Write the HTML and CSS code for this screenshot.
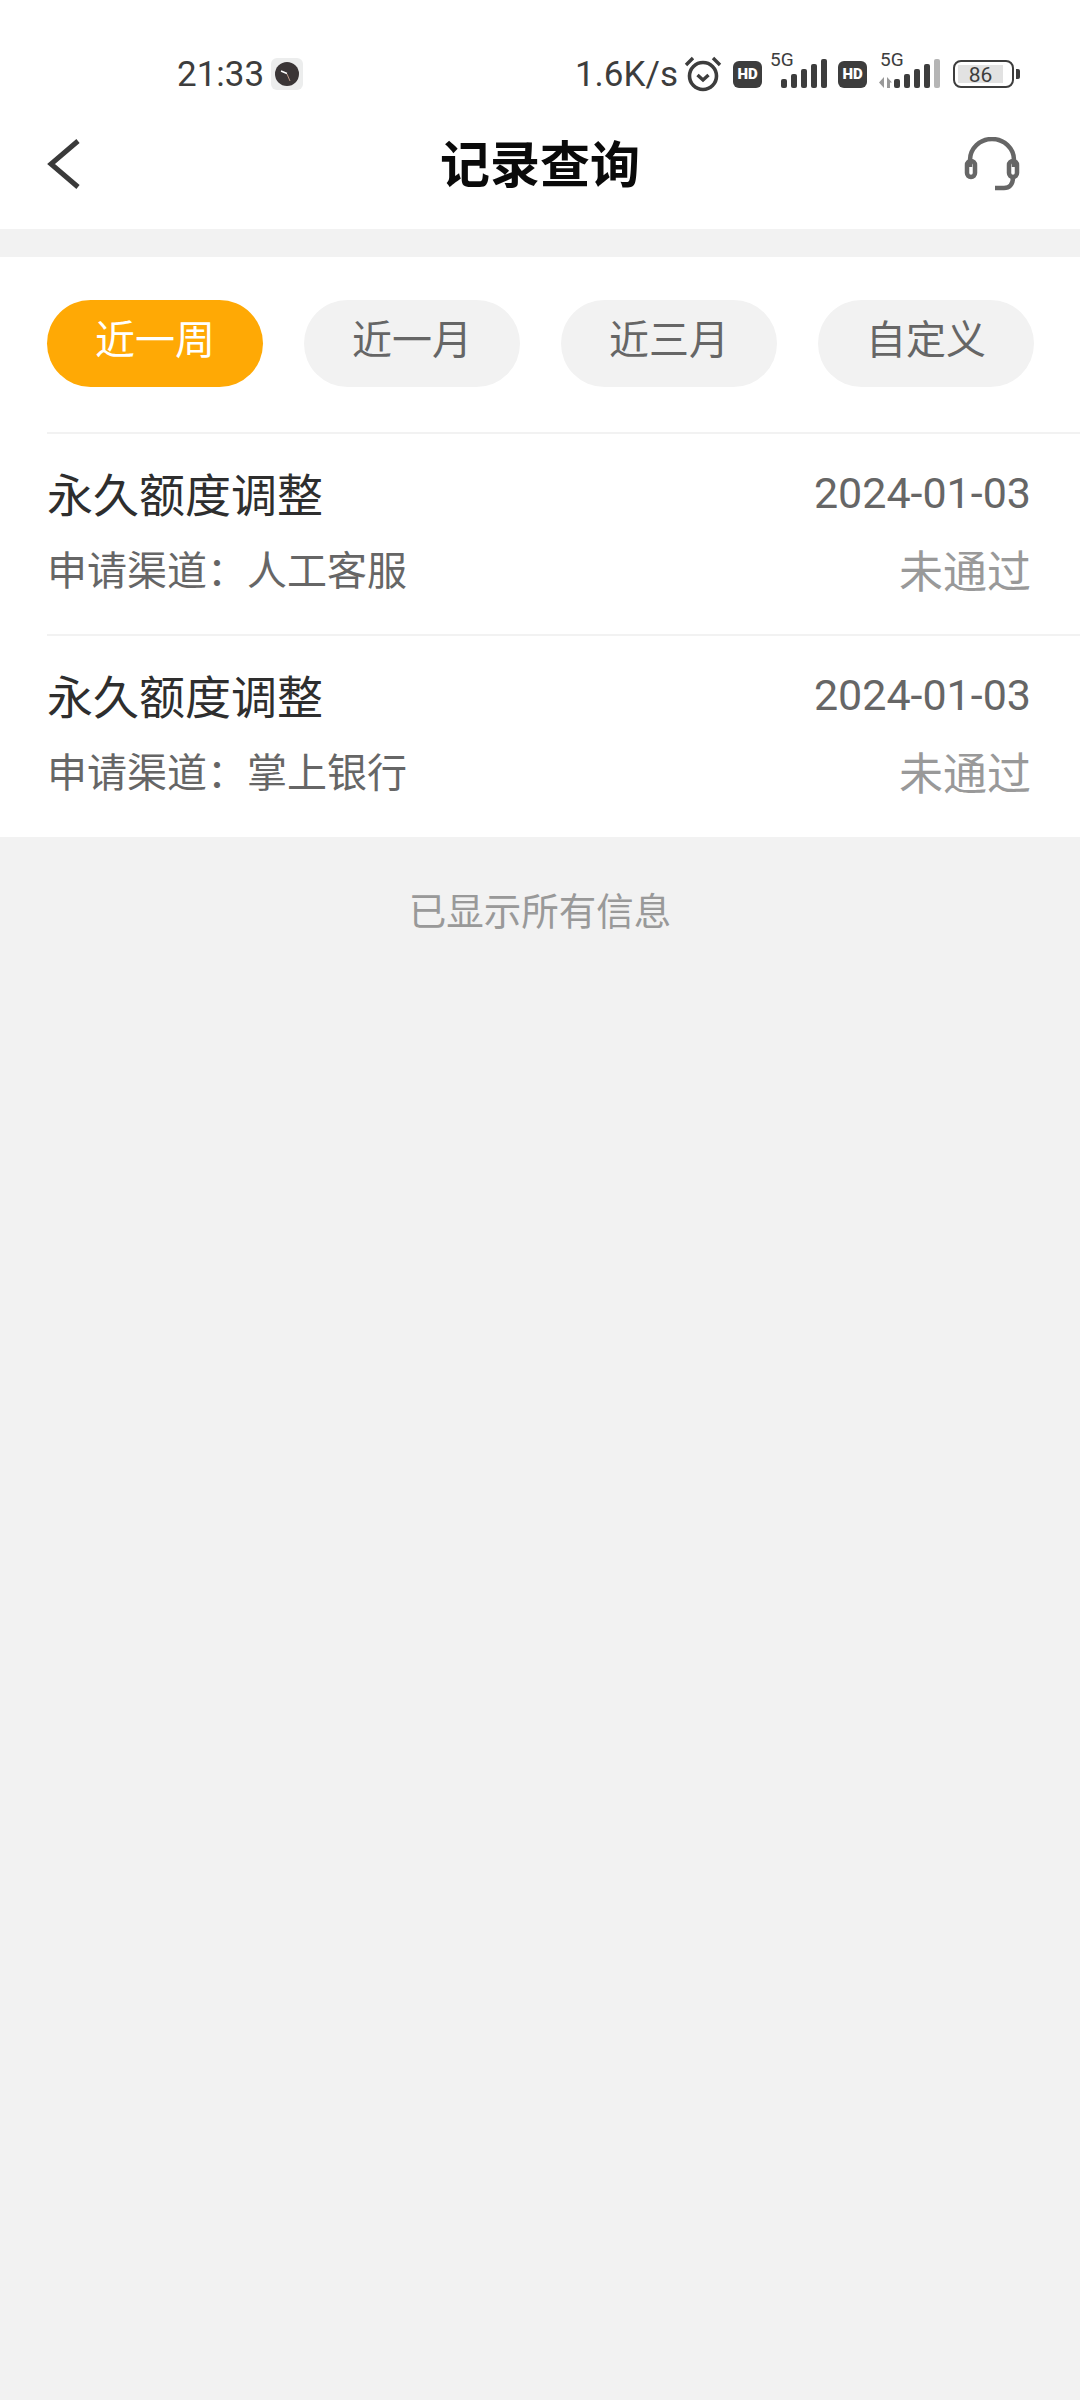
FILE: index.html
```html
<!DOCTYPE html>
<html lang="zh-CN">
<head>
    <meta charset="UTF-8">
    <meta name="viewport" content="width=device-width, initial-scale=1.0">
    <title>记录查询</title>
    <link rel="stylesheet" href="styles.css">
</head>
<body>
    <div class="top">
        <div class="statusbar">
            <div class="status-left">
                <span class="time">21:33</span>
                <span class="app-icon">
                    <svg width="24" height="24" viewBox="0 0 24 24">
                        <circle cx="12" cy="12" r="12" fill="#3a3536"/>
                        <path d="M6 9l6 2.5" stroke="#fff" stroke-width="1.4"/>
                        <path d="M12 12l3 7" stroke="#b98" stroke-width="1"/>
                    </svg>
                </span>
            </div>
            <div class="status-right">
                <span class="speed">1.6K/s</span>
                <svg class="alarm" width="38" height="38" viewBox="0 0 38 38" fill="none" stroke="#3d3d3d">
                    <circle cx="19" cy="21" r="13.5" stroke-width="3.6"/>
                    <path d="M13.5 20l5.5 5 5.5-5" stroke-width="3.4"/>
                    <path d="M2 10l7-7M36 10l-7-7" stroke-width="3.4"/>
                </svg>
                <span class="hd">HD</span>
                <span class="signal">
                    <span class="net">5G</span>
                    <svg width="46" height="30" viewBox="0 0 46 30" fill="#3d3d3d">
                        <rect x="0" y="20" width="6" height="9" rx="2"/>
                        <rect x="10" y="15" width="6" height="14" rx="2"/>
                        <rect x="20" y="10" width="6" height="19" rx="2"/>
                        <rect x="30" y="5" width="6" height="24" rx="2"/>
                        <rect x="40" y="0" width="6" height="29" rx="2"/>
                    </svg>
                </span>
                <span class="hd">HD</span>
                <span class="signal signal-two">
                    <span class="net">5G</span>
                    <svg width="61" height="30" viewBox="0 0 61 30" fill="#3d3d3d">
                        <path d="M5 18v11l-5-5.500zM8 18l5 5.500h-2v5.500h-3z" fill="#999"/>
                        <rect x="15" y="20" width="6" height="9" rx="2"/>
                        <rect x="25" y="15" width="6" height="14" rx="2"/>
                        <rect x="35" y="10" width="6" height="19" rx="2"/>
                        <rect x="45" y="5" width="6" height="24" rx="2"/>
                        <rect x="55" y="0" width="6" height="29" rx="2" fill="#b5b5b5"/>
                    </svg>
                </span>
                <span class="battery">
                    <span class="battery-body"><span class="battery-level">86</span></span>
                    <span class="battery-tip"></span>
                </span>
            </div>
        </div>
        <div class="header">
            <svg class="back" width="34" height="50" viewBox="0 0 34 50" fill="none">
                <path d="M31 2L4 25l27 23" stroke="#3a3a3a" stroke-width="5"/>
            </svg>
            <h1>记录查询</h1>
            <svg class="service" width="56" height="54" viewBox="0 0 56 54" fill="none" stroke="#666" stroke-width="4.500">
                <path d="M6 30v-7a22 21 0 0 1 44 0v7"/>
                <rect x="3" y="24" width="8" height="16" rx="4"/>
                <rect x="45" y="24" width="8" height="16" rx="4"/>
                <path d="M49 40c0 8-4 11-9 11h-9"/>
            </svg>
        </div>
    </div>

    <div class="panel">
        <div class="filters">
            <span class="pill active">近一周</span>
            <span class="pill">近一月</span>
            <span class="pill">近三月</span>
            <span class="pill">自定义</span>
        </div>
        <div class="record">
            <div class="record-row">
                <span class="record-name">永久额度调整</span>
                <span class="record-date">2024-01-03</span>
            </div>
            <div class="record-row">
                <span class="record-channel">申请渠道：人工客服</span>
                <span class="record-status">未通过</span>
            </div>
        </div>
        <div class="record">
            <div class="record-row">
                <span class="record-name">永久额度调整</span>
                <span class="record-date">2024-01-03</span>
            </div>
            <div class="record-row">
                <span class="record-channel">申请渠道：掌上银行</span>
                <span class="record-status">未通过</span>
            </div>
        </div>
    </div>

    <p class="end-note">已显示所有信息</p>
</body>
</html>
```

FILE: styles.css
```css
* {
    box-sizing: border-box;
}
body {
    margin: 0;
    min-height: 2400px;
    background: #f2f2f2;
    font-family: Roboto, "Noto Sans CJK SC", sans-serif;
}
.top {
    height: 229px;
    background: white;
}
.statusbar {
    display: flex;
    justify-content: space-between;
    align-items: center;
    height: 102px;
    padding: 46px 60px 0 177px;
    color: #3d3d3d;
}
.status-left, .status-right {
    display: flex;
    align-items: center;
}
.time {
    font-size: 35px;
}
.app-icon {
    display: flex;
    align-items: center;
    justify-content: center;
    width: 32px;
    height: 32px;
    margin-left: 7px;
    background: #eceded;
    border-radius: 6px;
}
.speed {
    font-size: 35px;
    margin-right: 6px;
}
.hd {
    width: 29px;
    height: 27px;
    margin: 0 8px 0 11px;
    background: #3d3d3d;
    border-radius: 6px;
    color: white;
    font-size: 15px;
    font-weight: 900;
    line-height: 27px;
    text-align: center;
}
.signal {
    position: relative;
    display: flex;
    align-items: flex-end;
    justify-content: flex-end;
    width: 57px;
    height: 30px;
}
.signal-two {
    width: 61px;
    margin-left: 4px;
}
.net {
    position: absolute;
    left: 0;
    top: -9px;
    font-size: 19px;
    line-height: 20px;
}
.signal-two .net {
    left: 1px;
}
.battery {
    display: flex;
    align-items: center;
    margin-left: 13px;
}
.battery-body {
    display: flex;
    align-items: center;
    width: 61px;
    height: 28px;
    padding: 3px;
    border: 2.500px solid #3d3d3d;
    border-radius: 8px;
}
.battery-level {
    width: 45px;
    height: 100%;
    background: #e2e2e2;
    font-size: 21px;
    line-height: 20px;
    text-align: center;
}
.battery-tip {
    width: 4px;
    height: 10px;
    margin-left: 2px;
    background: #3d3d3d;
    border-radius: 0 2px 2px 0;
}
.header {
    position: relative;
    display: flex;
    justify-content: space-between;
    align-items: center;
    margin-top: 14px;
    height: 96px;
    padding: 0 60px 0 47px;
}
.header h1 {
    position: absolute;
    left: 0;
    right: 0;
    margin: 0;
    padding-bottom: 6px;
    color: #0a0a0a;
    font-size: 50px;
    font-weight: 700;
    text-align: center;
}
.panel {
    margin-top: 28px;
    padding-top: 43px;
    background: white;
}
.filters {
    display: flex;
    justify-content: space-between;
    padding: 0 46px 0 47px;
    margin-bottom: 45px;
}
.pill {
    width: 216px;
    height: 87px;
    border-radius: 44px;
    background: #f2f2f2;
    color: #666;
    font-size: 40px;
    line-height: 82px;
    text-align: center;
}
.pill.active {
    background: #ffa905;
    color: white;
}
.record {
    display: flex;
    flex-direction: column;
    gap: 8px;
    height: 202px;
    margin-left: 47px;
    padding: 24px 49px 0 0;
    border-top: 2px solid #f2f2f2;
}
.record-row {
    display: flex;
    justify-content: space-between;
    align-items: center;
    height: 68px;
}
.record + .record {
    height: 203px;
}
.record-name {
    color: #2e2e2e;
    font-size: 46px;
}
.record-date {
    padding-top: 2px;
    color: #666;
    font-size: 43px;
}
.record-channel {
    color: #666;
    font-size: 40px;
}
.record-status {
    padding-top: 2px;
    color: #999;
    font-size: 44px;
}
.end-note {
    margin: 44px 0 0;
    color: #999;
    font-size: 37.500px;
    text-align: center;
}
```
